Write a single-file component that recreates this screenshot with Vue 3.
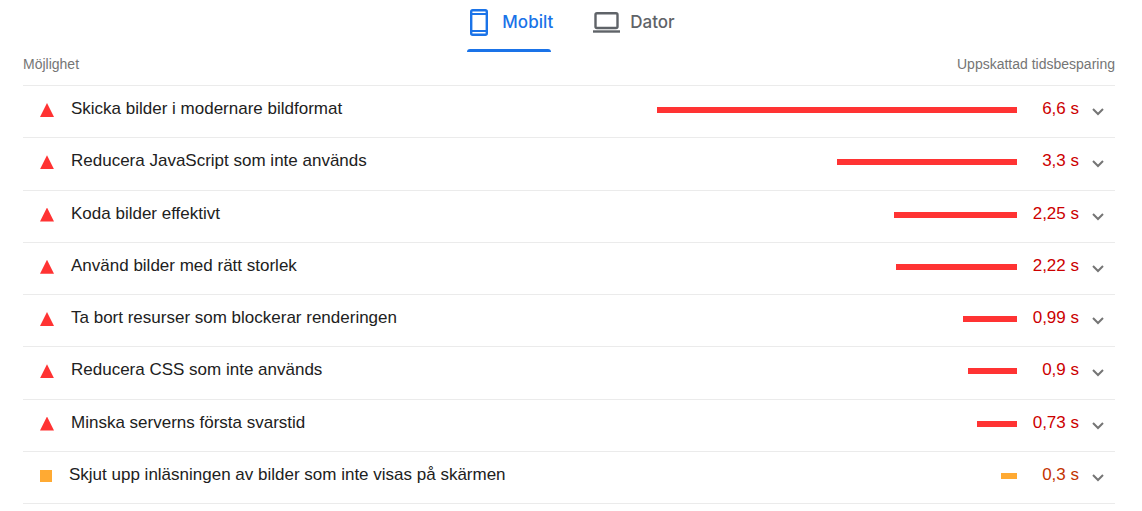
<script setup>
import { ref } from 'vue'

const device = ref('mobile')

const opportunities = [
  { title: 'Skicka bilder i modernare bildformat', seconds: 6.6, level: 'fail' },
  { title: 'Reducera JavaScript som inte används', seconds: 3.3, level: 'fail' },
  { title: 'Koda bilder effektivt', seconds: 2.25, level: 'fail' },
  { title: 'Använd bilder med rätt storlek', seconds: 2.22, level: 'fail' },
  { title: 'Ta bort resurser som blockerar renderingen', seconds: 0.99, level: 'fail' },
  { title: 'Reducera CSS som inte används', seconds: 0.9, level: 'fail' },
  { title: 'Minska serverns första svarstid', seconds: 0.73, level: 'fail' },
  { title: 'Skjut upp inläsningen av bilder som inte visas på skärmen', seconds: 0.3, level: 'average' }
]

const longest = Math.max(...opportunities.map((item) => item.seconds))
const barWidth = (seconds) => `${(seconds / longest) * 100}%`
const label = (seconds) => `${String(seconds).replace('.', ',')} s`
</script>

<template>
  <main class="report">
    <nav class="tabs" role="tablist" aria-label="Enhet">
      <button class="tab" type="button" role="tab" :aria-selected="device === 'mobile'" @click="device = 'mobile'">
        <svg class="phone" viewBox="0 0 18 27" width="18" height="27" fill="none" stroke="currentColor" aria-hidden="true">
          <rect x="1.2" y="1.2" width="15.6" height="24.6" rx="1.5" stroke-width="2.4" />
          <path d="M1 5H17M1 22H17" stroke-width="2" />
        </svg>
        <span>Mobilt</span>
      </button>
      <button class="tab" type="button" role="tab" :aria-selected="device === 'desktop'" @click="device = 'desktop'">
        <svg class="laptop" viewBox="0 0 27 21" width="27" height="21" fill="none" stroke="currentColor" aria-hidden="true">
          <rect x="2.5" y="1.2" width="22" height="14.8" rx="1.5" stroke-width="2.4" />
          <path d="M0 19.5H27" stroke-width="2.4" />
        </svg>
        <span>Dator</span>
      </button>
    </nav>

    <div class="heading">
      <span>Möjlighet</span>
      <span>Uppskattad tidsbesparing</span>
    </div>

    <ul class="list">
      <li v-for="item in opportunities" :key="item.title" class="item">
        <button class="row" :class="item.level" type="button" aria-expanded="false">
          <span class="marker"></span>
          <span class="title">{{ item.title }}</span>
          <span class="track"><span class="bar" :style="{ width: barWidth(item.seconds) }"></span></span>
          <span class="value">{{ label(item.seconds) }}</span>
          <svg class="chevron" viewBox="0 0 12 8" width="12" height="8" fill="none" stroke="#757575" stroke-width="2" aria-hidden="true">
            <path d="M1 1L6 6L11 1" />
          </svg>
        </button>
      </li>
    </ul>
  </main>
</template>

<style>
body {
  margin: 0;
  background: #fff;
}
</style>

<style scoped>
.report {
  padding: 0 27px 0 23px;
  font-family: "Liberation Sans", Arial, sans-serif;
  color: #212121;
}

button {
  margin: 0;
  border: 0;
  background: none;
  cursor: pointer;
}

.tabs {
  display: flex;
  justify-content: center;
  gap: 40px;
  padding-left: 4px;
}

.tab {
  position: relative;
  display: flex;
  align-items: center;
  height: 52px;
  padding: 0 0 8px;
  font: 500 17px/24px "Google Sans", Inter, sans-serif;
  color: #5f6368;
}

.tab[aria-selected="true"] {
  color: #1a73e8;
}

.tab[aria-selected="true"]::after {
  content: "";
  position: absolute;
  inset: auto 2px 0 0;
  height: 3px;
  border-radius: 3px 3px 0 0;
  background: #1a73e8;
}

.phone {
  margin: 0 14px 0 3px;
}

.laptop {
  margin-right: 10px;
}

.heading {
  display: flex;
  justify-content: space-between;
  padding: 2px 0 11px;
  font-size: 14px;
  line-height: 20px;
  color: #757575;
}

.list {
  display: grid;
  grid-auto-rows: 1fr;
  min-height: 418px;
  margin: 0;
  padding: 0;
  border-bottom: 1px solid #ebebeb;
  list-style: none;
}

.item {
  border-top: 1px solid #ebebeb;
}

.row {
  display: flex;
  align-items: center;
  width: 100%;
  padding: 11px 11px 11px 17px;
  font: 17px/24px "Liberation Sans", Arial, sans-serif;
  color: #212121;
  text-align: left;
}

.marker {
  flex: none;
  width: 14px;
  height: 14px;
  margin: 2px 17px 0 0;
  background: #f33;
  clip-path: polygon(50% 0, 100% 100%, 0 100%);
}

.average .marker {
  width: 12px;
  height: 12px;
  background: #fa3;
  clip-path: none;
}

.title {
  flex: 1;
}

.track {
  display: flex;
  flex: 0 0 34%;
  justify-content: flex-end;
  max-width: 360px;
  margin-top: 2px;
}

.bar {
  height: 6px;
  background: #f33;
}

.average .bar {
  background: #fa3;
}

.value {
  width: 62px;
  text-align: right;
  color: #c00;
}

.average .value {
  color: #c33300;
}

.chevron {
  flex: none;
  margin: 6px 0 0 13px;
}
</style>
